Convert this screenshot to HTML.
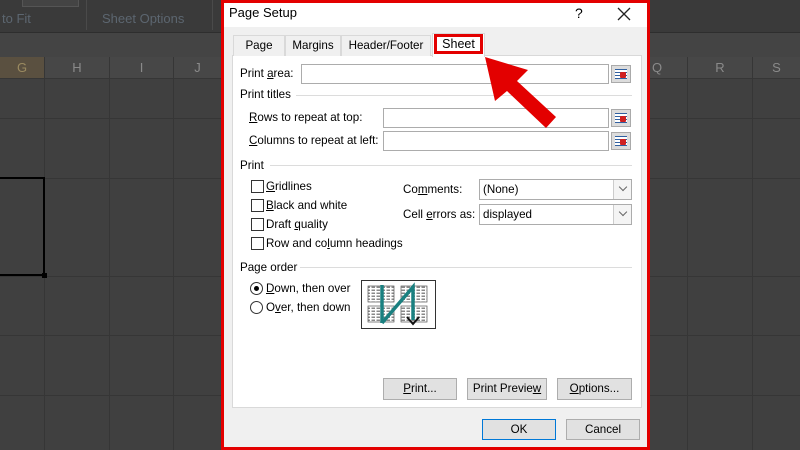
<!DOCTYPE html>
<html><head><meta charset="utf-8"><style>
*{margin:0;padding:0;box-sizing:border-box}
body{width:800px;height:450px;overflow:hidden;background:#404040;font-family:"Liberation Sans",sans-serif;font-size:11.6px;color:#000;position:relative}
.a{position:absolute}
.vl{position:absolute;width:1px;background:#363636}
.hl{position:absolute;height:1px;background:#363636}
.hd{position:absolute;top:57px;height:21px;background:#474747;color:#8a8a8a;font-size:13px;text-align:center;line-height:21px}
.t{position:absolute;white-space:nowrap}
.in{position:absolute;background:#fff;border:1px solid #acacac}
.ic{position:absolute;width:20px;height:18px;background:#dcdcdc;border:1px solid #aaa}
.ic:before{content:"";position:absolute;left:3px;top:3px;width:12px;height:10px;background:repeating-linear-gradient(#3060a0 0 1px,#fff 1px 3px)}
.ic:after{content:"";position:absolute;left:8px;top:6px;width:6px;height:6px;background:#d02020;border-radius:1px}
.sep{position:absolute;height:1px;background:#dcdcdc}
.cb{position:absolute;width:13px;height:13px;border:1px solid #333;background:#fff}
.btn{position:absolute;height:22px;background:#e1e1e1;border:1px solid #adadad;text-align:center;line-height:20px}
.sel{position:absolute;background:#fff;border:1px solid #acacac;height:21px;padding-left:3px;line-height:19px}
.sel:after{content:"";position:absolute;right:0;top:0;width:17px;height:19px;border-left:1px solid #ccc;background:#f4f4f4}
.sel i{position:absolute;right:5px;top:4px;width:6px;height:6px;border-right:1px solid #666;border-bottom:1px solid #666;transform:rotate(45deg);z-index:2}
u{text-decoration:underline}
</style></head><body>
<div class="a" style="left:0;top:0;width:800px;height:32px;background:#3a3a3a"></div>
<div class="a" style="left:22px;top:0;width:57px;height:7px;border:1px solid #555;border-top:none;background:#444"></div>
<div class="t" style="left:2px;top:11px;color:#5c6670;font-size:13px">to Fit</div>
<div class="t" style="left:102px;top:11px;color:#5c6670;font-size:13px">Sheet Options</div>
<div class="vl" style="left:86px;top:0;height:30px;background:#4a4a4a"></div>
<div class="vl" style="left:212px;top:0;height:30px;background:#4a4a4a"></div>
<div class="a" style="left:0;top:32px;width:800px;height:25px;background:#444"></div>
<div class="hl" style="left:0;top:32px;width:800px;background:#2e2e2e"></div>
<div class="hd" style="left:0;width:44px;background:#5a5040;color:#9a8a60">G</div>
<div class="hd" style="left:45px;width:64px">H</div>
<div class="hd" style="left:110px;width:63px">I</div>
<div class="hd" style="left:174px;width:47px">J</div>
<div class="hd" style="left:650px;width:37px;text-align:left;padding-left:2px">Q</div>
<div class="hd" style="left:688px;width:64px">R</div>
<div class="hd" style="left:753px;width:47px">S</div>
<div class="vl" style="left:44px;top:57px;height:393px"></div>
<div class="vl" style="left:109px;top:57px;height:393px"></div>
<div class="vl" style="left:173px;top:57px;height:393px"></div>
<div class="vl" style="left:687px;top:57px;height:393px"></div>
<div class="vl" style="left:752px;top:57px;height:393px"></div>
<div class="hl" style="left:0;top:78px;width:800px"></div>
<div class="hl" style="left:0;top:118px;width:800px"></div>
<div class="hl" style="left:0;top:178px;width:800px"></div>
<div class="hl" style="left:0;top:276px;width:800px"></div>
<div class="hl" style="left:0;top:335px;width:800px"></div>
<div class="hl" style="left:0;top:395px;width:800px"></div>
<div class="a" style="left:0;top:177px;width:45px;height:99px;border:2px solid #000;border-left:none"></div>
<div class="a" style="left:42px;top:273px;width:5px;height:5px;background:#000"></div>
<div class="a" style="left:221px;top:0;width:429px;height:450px;background:#f0f0f0;border:3px solid #e30000"></div>
<div class="a" style="left:224px;top:3px;width:423px;height:24px;background:#fff"></div>
<div class="t" style="left:229px;top:5px;font-size:13px">Page Setup</div>
<div class="t" style="left:575px;top:5px;font-size:14px">?</div>
<svg class="a" style="left:617px;top:7px" width="14" height="14"><path d="M1 1L13 13M13 1L1 13" stroke="#222" stroke-width="1.3"/></svg>
<div class="a" style="left:232px;top:55px;width:410px;height:353px;background:#fff;border:1px solid #d9d9d9"></div>
<div class="a" style="left:233px;top:35px;width:52px;height:21px;border:1px solid #d9d9d9;border-bottom:none;background:#f0f0f0;text-align:center;line-height:20px">Page</div>
<div class="a" style="left:285px;top:35px;width:56px;height:21px;border:1px solid #d9d9d9;border-bottom:none;background:#f0f0f0;text-align:center;line-height:20px">Margins</div>
<div class="a" style="left:341px;top:35px;width:90px;height:21px;border:1px solid #d9d9d9;border-bottom:none;background:#f0f0f0;text-align:center;line-height:20px">Header/Footer</div>
<div class="a" style="left:432px;top:33px;width:53px;height:24px;background:#fff;border:1px solid #d9d9d9;border-bottom:none"></div>
<div class="a" style="left:434px;top:34px;width:49px;height:20px;border:3px solid #e30000;text-align:center;line-height:14px;font-size:12.5px">Sheet</div>
<div class="t" style="left:240px;top:67px">Print <u>a</u>rea:</div>
<div class="in" style="left:301px;top:64px;width:308px;height:20px"></div>
<div class="ic" style="left:611px;top:65px"></div>
<div class="t" style="left:240px;top:88px">Print titles</div>
<div class="sep" style="left:296px;top:95px;width:336px"></div>
<div class="t" style="left:249px;top:111px"><u>R</u>ows to repeat at top:</div>
<div class="in" style="left:383px;top:108px;width:226px;height:20px"></div>
<div class="ic" style="left:611px;top:109px"></div>
<div class="t" style="left:249px;top:134px"><u>C</u>olumns to repeat at left:</div>
<div class="in" style="left:383px;top:131px;width:226px;height:20px"></div>
<div class="ic" style="left:611px;top:132px"></div>
<div class="t" style="left:240px;top:159px">Print</div>
<div class="sep" style="left:270px;top:165px;width:362px"></div>
<div class="cb" style="left:251px;top:180px"></div><div class="t" style="left:266px;top:180px"><u>G</u>ridlines</div>
<div class="cb" style="left:251px;top:199px"></div><div class="t" style="left:266px;top:199px"><u>B</u>lack and white</div>
<div class="cb" style="left:251px;top:218px"></div><div class="t" style="left:266px;top:218px">Draft <u>q</u>uality</div>
<div class="cb" style="left:251px;top:237px"></div><div class="t" style="left:266px;top:237px">Row and co<u>l</u>umn headings</div>
<div class="t" style="left:403px;top:183px">Co<u>m</u>ments:</div>
<div class="sel" style="left:479px;top:179px;width:153px">(None)<i></i></div>
<div class="t" style="left:403px;top:208px">Cell <u>e</u>rrors as:</div>
<div class="sel" style="left:479px;top:204px;width:153px">displayed<i></i></div>
<div class="t" style="left:240px;top:261px">Page order</div>
<div class="sep" style="left:300px;top:267px;width:332px"></div>
<div class="a" style="left:250px;top:282px;width:13px;height:13px;border:1px solid #333;border-radius:50%;background:#fff"><div class="a" style="left:3px;top:3px;width:5px;height:5px;border-radius:50%;background:#000"></div></div>
<div class="t" style="left:266px;top:282px"><u>D</u>own, then over</div>
<div class="a" style="left:250px;top:301px;width:13px;height:13px;border:1px solid #333;border-radius:50%;background:#fff"></div>
<div class="t" style="left:266px;top:301px">O<u>v</u>er, then down</div>
<svg class="a" style="left:361px;top:280px" width="76" height="50" viewBox="0 0 76 50">
<defs><pattern id="p" width="5" height="3" patternUnits="userSpaceOnUse"><rect width="5" height="3" fill="#fff"/><rect x="0.5" y="0.5" width="3.5" height="1.5" fill="#888"/></pattern></defs>
<rect x="0.5" y="0.5" width="74" height="48" fill="#fff" stroke="#333"/>
<g fill="url(#p)" stroke="#555" stroke-width="0.7">
<rect x="7" y="6" width="26" height="16"/><rect x="40" y="6" width="26" height="16"/>
<rect x="7" y="26" width="26" height="16"/><rect x="40" y="26" width="26" height="16"/></g>
<g stroke="#1a8080" stroke-width="3.5" fill="none"><path d="M21 5 V43"/><path d="M21 43 L52 7 V40"/></g>
<path d="M46 37 L52 44 L58 37" stroke="#111" stroke-width="2" fill="none"/>
</svg>
<div class="btn" style="left:383px;top:378px;width:74px"><u>P</u>rint...</div>
<div class="btn" style="left:467px;top:378px;width:80px">Print Previe<u>w</u></div>
<div class="btn" style="left:557px;top:378px;width:75px"><u>O</u>ptions...</div>
<div class="btn" style="left:482px;top:419px;width:74px;border:1px solid #0078d7;height:21px">OK</div>
<div class="btn" style="left:566px;top:419px;width:74px;height:21px">Cancel</div>
<svg class="a" style="left:0;top:0" width="800" height="450"><polygon points="485,57 528,70 517,81 556,117 546,128 507,91 495,101" fill="#e30000"/></svg>
</body></html>
